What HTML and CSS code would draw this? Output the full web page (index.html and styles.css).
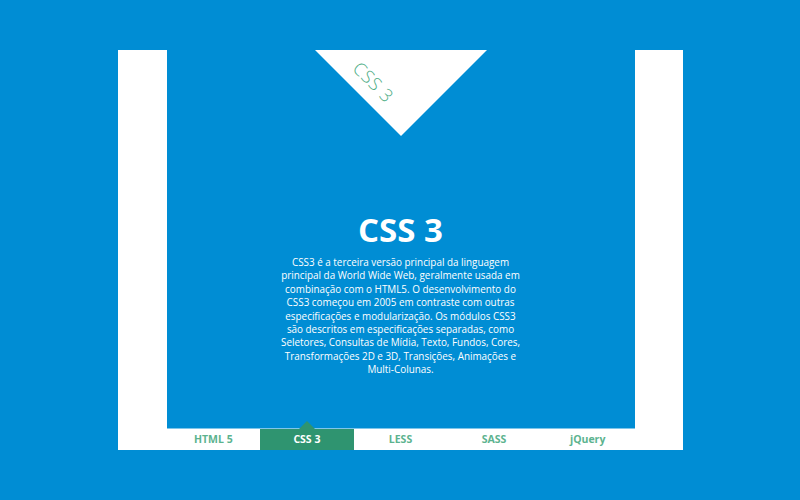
FILE: index.html
```html
<!DOCTYPE html>
<html>
<head>
<meta charset="utf-8">
<link rel="stylesheet" href="styles.css">
</head>
<body>
<div class="stage">
  <div class="card">
    <div class="panel">
      <div class="flag"><span class="flag-label">CSS 3</span></div>
      <div class="content">
        <h1 class="title">CSS 3</h1>
        <p class="desc">CSS3 é a terceira versão principal da linguagem<br>principal da World Wide Web, geralmente usada em<br>combinação com o HTML5. O desenvolvimento do<br>CSS3 começou em 2005 em contraste com outras<br>especificações e modularização. Os módulos CSS3<br>são descritos em especificações separadas, como<br>Seletores, Consultas de Mídia, Texto, Fundos, Cores,<br>Transformações 2D e 3D, Transições, Animações e<br>Multi-Colunas.</p>
      </div>
    </div>
    <div class="tabs">
      <div class="tab">HTML 5</div>
      <div class="tab active">CSS 3</div>
      <div class="tab">LESS</div>
      <div class="tab">SASS</div>
      <div class="tab">jQuery</div>
    </div>
  </div>
</div>
</body>
</html>
```
FILE: styles.css
```css
html, body {
  margin: 0;
  padding: 0;
  background: #008dd4;
  font-family: "Open Sans", "Liberation Sans", sans-serif;
}
.stage {
  width: 800px;
  height: 500px;
  padding-top: 50px;
  box-sizing: border-box;
}
.card {
  width: 565px;
  height: 400px;
  margin-left: 118px;
  background: #fff;
  display: flex;
  flex-direction: column;
  align-items: center;
}
.panel {
  width: 468px;
  height: 378px;
  background: #008dd4;
  position: relative;
  display: flex;
  flex-direction: column;
  align-items: center;
}
.flag {
  position: absolute;
  left: 148px;
  top: 0;
  width: 0;
  height: 0;
  border-left: 86px solid transparent;
  border-right: 86px solid transparent;
  border-top: 86px solid #fff;
}
.flag-label {
  position: absolute;
  left: -36px;
  top: -80px;
  font-size: 18px;
  font-weight: 300;
  color: #4fae86;
  transform: rotate(45deg);
  transform-origin: 0 0;
  white-space: nowrap;
  letter-spacing: 0.6px;
}
.content {
  margin-top: 158px;
  text-align: center;
  color: #fff;
}
.title {
  margin: 0;
  font-size: 33px;
  font-weight: 700;
  line-height: 44px;
}
.desc {
  margin: 4px 0 0;
  font-size: 9.9px;
  line-height: 13.4px;
  white-space: nowrap;
}
.tabs {
  width: 468px;
  height: 22px;
  display: flex;
  border-top: 1px solid #7fc6ea;
  box-sizing: border-box;
}
.tab {
  flex: 1;
  text-align: center;
  font-size: 10.5px;
  font-weight: 700;
  color: #5cb38f;
  line-height: 21px;
  position: relative;
}
.tab.active {
  background: #2f9470;
  color: #fff;
}
.tab.active::before {
  content: "";
  position: absolute;
  left: 50%;
  top: -8px;
  margin-left: -8px;
  border-left: 8px solid transparent;
  border-right: 8px solid transparent;
  border-bottom: 8px solid #2f9470;
}
```
